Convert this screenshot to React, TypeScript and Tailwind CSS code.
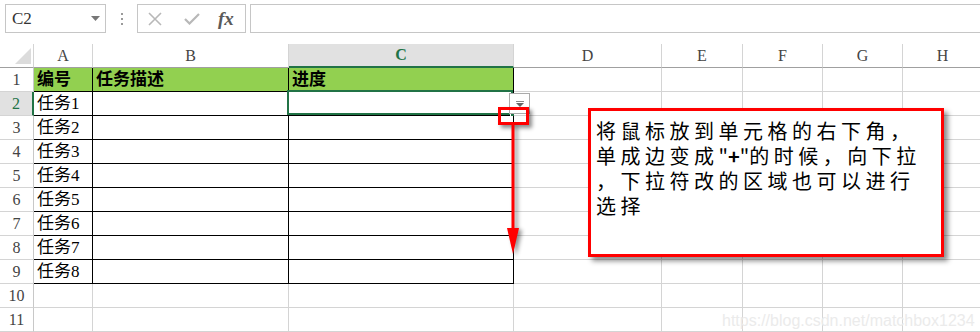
import React from "react";

const COLS = ["A", "B", "C", "D", "E", "F", "G", "H"];
const ROWS = [1, 2, 3, 4, 5, 6, 7, 8, 9, 10, 11];

const cjk = "font-['Liberation_Serif','Noto_Sans_CJK_SC',serif]";
const serif = "font-['Liberation_Serif',serif]";

function cellText(row: number, col: number) {
  if (row === 1) return ["编号", "任务描述", "进度"][col] ?? "";
  if (col === 0 && row <= 9) return `任务${row - 1}`;
  return "";
}

function Toolbar() {
  return (
    <div className="flex h-[44px] items-start pl-[5px] pt-[4px]">
      <div className="flex h-[29px] w-[101px] items-center justify-between border border-[#c6c6c6] pl-[6px] pr-[5px]">
        <span className={`${serif} text-[17px] text-[#333]`}>C2</span>
        <svg width="9" height="5" viewBox="0 0 9 5">
          <path d="M0 0h9L4.5 5z" fill="#777" />
        </svg>
      </div>
      <div className="flex h-[29px] w-[31px] flex-col items-center justify-center gap-[3px]">
        <span className="h-[2px] w-[2px] bg-[#9a9a9a]" />
        <span className="h-[2px] w-[2px] bg-[#9a9a9a]" />
        <span className="h-[2px] w-[2px] bg-[#9a9a9a]" />
      </div>
      <div className="flex h-[29px] w-[109px] items-center border border-[#c6c6c6]">
        <svg className="ml-[10px]" width="14" height="14" viewBox="0 0 14 14">
          <path d="M1 1l12 12M13 1L1 13" stroke="#b8b8b8" strokeWidth="1.6" />
        </svg>
        <svg className="ml-[22px]" width="16" height="12" viewBox="0 0 16 12">
          <path d="M1 6l4.5 4.5L15 1" stroke="#b8b8b8" strokeWidth="2.2" fill="none" />
        </svg>
        <span className={`${serif} ml-[18px] text-[19px] font-bold italic leading-none text-[#5a5a5a]`}>fx</span>
      </div>
      <div className="ml-[4px] h-[29px] flex-1 border border-r-0 border-[#c6c6c6]" />
    </div>
  );
}

function CornerCell() {
  return (
    <div className="flex items-end justify-end border-b border-r border-b-[#a0a0a0] border-r-[#d4d4d4] bg-white pb-[3px] pr-[2px]">
      <svg width="16" height="16" viewBox="0 0 16 16">
        <path d="M16 0V16H0z" fill="#dcdcdc" />
      </svg>
    </div>
  );
}

function ColHeader({ name }: { name: string }) {
  const selected = name === "C";
  return (
    <div
      className={`flex items-center justify-center border-r border-r-[#d4d4d4] ${serif} text-[16px] ${
        selected
          ? "border-b-2 border-b-[#217346] bg-[#e1e1e1] font-bold text-[#217346]"
          : "border-b border-b-[#a0a0a0] bg-white text-[#444]"
      }`}
    >
      {name}
    </div>
  );
}

function RowHeader({ row }: { row: number }) {
  const selected = row === 2;
  return (
    <div
      className={`flex items-center justify-center border-b border-b-[#d4d4d4] ${serif} text-[16px] ${
        selected
          ? "border-r-2 border-r-[#217346] bg-[#e1e1e1] text-[#217346]"
          : "border-r border-r-[#c8c8c8] bg-white text-[#444]"
      }`}
    >
      {row}
    </div>
  );
}

function Cell({ row, col }: { row: number; col: number }) {
  const inTable = row <= 9 && col < 3;
  const text = cellText(row, col);
  const isActive = row === 2 && col === 2;
  return (
    <div
      className={`relative flex items-center border-b border-r px-[3px] text-[17px] text-black ${cjk} ${
        inTable ? "border-black" : "border-[#d4d4d4]"
      } ${row === 1 && col < 3 ? "bg-[#92d050] font-bold" : "bg-white"}`}
    >
      <span className="whitespace-nowrap leading-none">{text}</span>
      {isActive && (
        <>
          <div className="absolute -left-[2px] -top-[2px] bottom-0 right-0 border-2 border-[#217346]" />
          <div className="absolute -bottom-[3px] -right-[3px] h-[6px] w-[6px] border border-white bg-[#217346]" />
          <div className="absolute left-[220px] top-[1px] z-10 flex h-[21px] w-[21px] items-center justify-center border border-[#ababab] bg-white">
            <svg width="8" height="6" viewBox="0 0 8 6">
              <rect x="0" y="0" width="8" height="1" fill="#888" />
              <path d="M0 2h8L4 6z" fill="#666" />
            </svg>
          </div>
        </>
      )}
    </div>
  );
}

function Sheet() {
  return (
    <div className="grid grid-cols-[34px_59px_196px_225px_148px_81px_80px_80px_80px] grid-rows-[24px_repeat(11,24px)]">
      <CornerCell />
      {COLS.map((c) => (
        <ColHeader key={c} name={c} />
      ))}
      {ROWS.map((r) => (
        <React.Fragment key={r}>
          <RowHeader row={r} />
          {COLS.map((c, i) => (
            <Cell key={c} row={r} col={i} />
          ))}
        </React.Fragment>
      ))}
    </div>
  );
}

function Annotations() {
  return (
    <>
      {/* highlight on the fill handle */}
      <div className="absolute left-[498px] top-[107px] z-20 h-[18px] w-[31px] border-[3px] border-[#ff0000] shadow-[3px_3px_4px_rgba(0,0,0,0.45)]" />
      {/* drag arrow */}
      <svg
        className="absolute left-[500px] top-[124px] z-20 drop-shadow-[3px_2px_2px_rgba(0,0,0,0.45)]"
        width="26"
        height="134"
        viewBox="0 0 26 134"
      >
        <rect x="11.5" y="0" width="3" height="108" fill="#ff0000" />
        <path d="M7 104h12L13 130z" fill="#ff0000" />
      </svg>
      {/* callout */}
      <div className="absolute left-[588px] top-[108px] z-20 h-[149px] w-[356px] border-[3px] border-[#ff0000] bg-white pl-[5px] pt-[7px] shadow-[4px_4px_5px_rgba(0,0,0,0.45)]">
        <div className="font-['Noto_Sans_CJK_SC',sans-serif] text-[20px] leading-[25px] tracking-[4.5px] text-black">
          <div>将鼠标放到单元格的右下角，</div>
          <div>
            单成边变成<span className="tracking-normal">"<b>+</b>"</span>的时候，向下拉
          </div>
          <div>，下拉符改的区域也可以进行</div>
          <div>选择</div>
        </div>
      </div>
      {/* watermark */}
      <div className="absolute left-[722px] top-[311px] z-20 font-['Liberation_Sans',sans-serif] text-[16px] leading-[20px] text-[#ebebeb]">
        https://blog.csdn.net/matchbox1234
      </div>
    </>
  );
}

export default function App() {
  return (
    <div className="relative h-[332px] w-[980px] overflow-hidden bg-white">
      <Toolbar />
      <Sheet />
      <Annotations />
    </div>
  );
}
